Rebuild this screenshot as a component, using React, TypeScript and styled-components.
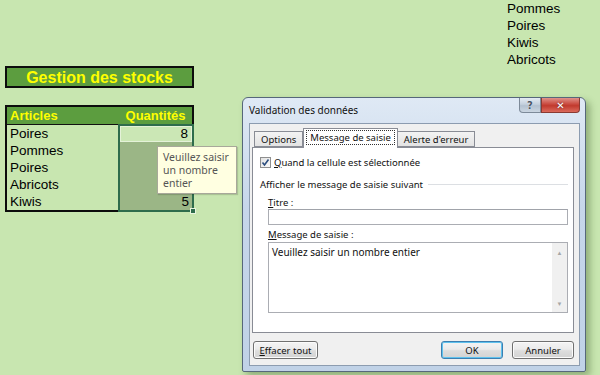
import React from 'react';
import styled, { createGlobalStyle } from 'styled-components';

const GlobalStyle = createGlobalStyle`
  html, body {
    margin: 0;
    padding: 0;
  }
  body {
    background: #c8e6b0;
    font-family: "Liberation Sans", Arial, sans-serif;
  }
`;

const Page = styled.div`
  position: relative;
  width: 600px;
  height: 375px;
  overflow: hidden;
  background: #c8e6b0;
  display: flex;
  justify-content: space-between;
`;

const Sheet = styled.div`
  padding: 66px 0 0 5px;
  width: 189px;
  display: flex;
  flex-direction: column;
  gap: 17px;
`;

const TitleBox = styled.div`
  height: 18px;
  border: 2px solid #0c0c0c;
  background: #5c9d3f;
  color: #ffff00;
  font-weight: bold;
  font-size: 16px;
  line-height: 19px;
  text-align: center;
`;

const Table = styled.div`
  border: 2px solid #0c0c0c;
  display: grid;
  grid-template-columns: 112px 73px;
  font-size: 13.5px;
`;

const HeadCell = styled.div<{ $align?: string }>`
  height: 17px;
  line-height: 17px;
  background: #5c9d3f;
  color: #ffff00;
  font-weight: bold;
  font-size: 13px;
  padding: 0 3px;
  text-align: ${p => p.$align || 'left'};
`;

const LeftBody = styled.div`
  border-top: 1px solid #111;
  border-right: 1px solid #111;
`;

const Selection = styled.div`
  position: relative;
  margin: 0 -2px -2px -1px;
  border: 2px solid #2e6c4c;
`;

const Cell = styled.div<{ $shade?: boolean; $right?: boolean }>`
  height: 17px;
  line-height: 17px;
  padding: 0 3px;
  color: #000;
  text-align: ${p => (p.$right ? 'right' : 'left')};
  background: ${p => (p.$shade ? '#9bb686' : 'transparent')};
`;

const ActiveCell = styled(Cell)`
  height: 14px;
  line-height: 14px;
  border: 1px solid #e4f2d8;
  background: #cbe7b5;
`;

const FillHandle = styled.div`
  position: absolute;
  right: -4px;
  bottom: -4px;
  width: 4px;
  height: 4px;
  background: #2e6c4c;
  border: 1px solid #e8f4de;
`;

const Tip = styled.div`
  position: absolute;
  left: 157px;
  top: 146px;
  width: 68px;
  height: 38px;
  padding: 4px 5px;
  background: #ffffe1;
  border: 1px solid #a8a89a;
  box-shadow: 1px 1px 1px rgba(0, 0, 0, 0.15);
  color: #555;
  font-family: "Noto Sans", "Open Sans", sans-serif;
  font-size: 10.5px;
  line-height: 13px;
`;

const FruitList = styled.div`
  width: 93px;
  font-size: 13.5px;
  line-height: 17px;
  color: #000;
`;

/* dialog window */

const Window = styled.div`
  position: absolute;
  left: 242px;
  top: 97px;
  width: 344px;
  height: 275px;
  box-sizing: border-box;
  border: 1px solid #56677a;
  border-radius: 6px 6px 2px 2px;
  background: linear-gradient(#dfe9f5, #c6d6ea 40%, #c0d2e7);
  box-shadow: 4px 4px 7px rgba(40, 70, 20, 0.35);
  display: flex;
  flex-direction: column;
  font-family: "Noto Sans", "Open Sans", sans-serif;
  font-size: 9.5px;
  color: #111;
`;

const TitleBar = styled.div`
  height: 25px;
  display: flex;
  align-items: flex-start;
  justify-content: space-between;
  padding: 0 5px 0 6px;
`;

const TitleText = styled.div`
  font-size: 10px;
  line-height: 25px;
  color: #111;
`;

const CaptionButtons = styled.div`
  display: flex;
`;

const CapButton = styled.div<{ $close?: boolean }>`
  width: ${p => (p.$close ? '39px' : '22px')};
  height: 15px;
  box-sizing: border-box;
  border: 1px solid ${p => (p.$close ? '#8a3a32' : '#7d8a99')};
  border-top: none;
  border-radius: ${p => (p.$close ? '0 0 4px 0' : '0 0 0 4px')};
  background: ${p =>
    p.$close
      ? 'linear-gradient(#e0928a, #c9483d 45%, #c13a2e 55%, #db6a5c)'
      : 'linear-gradient(#e4ebf3, #c4d0dd 45%, #b3c1d0 55%, #cbd6e2)'};
  display: flex;
  align-items: center;
  justify-content: center;
  color: ${p => (p.$close ? '#fff' : '#4a5666')};
  font-family: "DejaVu Sans", sans-serif;
  font-weight: bold;
  font-size: 10px;
  text-shadow: ${p => (p.$close ? '0 0 2px #5a2a2a' : '0 0 1px #fff')};
`;

const Content = styled.div`
  flex: 1;
  margin: 0 5px 5px 6px;
  border: 1px solid #8c9cb0;
  background: #f0f0f0;
  padding: 4px 5px 0 2px;
  display: flex;
  flex-direction: column;
`;

const Tabs = styled.div`
  display: flex;
  align-items: flex-end;
  padding-left: 2px;
  height: 19px;
  position: relative;
  z-index: 1;
`;

const Tab = styled.div<{ $active?: boolean }>`
  box-sizing: border-box;
  height: ${p => (p.$active ? '20px' : '16px')};
  margin: ${p => (p.$active ? '0 -1px -1px 0' : '0')};
  padding: ${p => (p.$active ? '0 3px 2px' : '0 6px')};
  border: 1px solid #898c95;
  border-bottom: ${p => (p.$active ? 'none' : '1px solid #898c95')};
  background: ${p => (p.$active ? '#fff' : 'linear-gradient(#f3f3f3, #e3e3e3)')};
  display: flex;
  align-items: center;
`;

const Focus = styled.span`
  outline: 1px dotted #333;
  padding: 0 3px;
  line-height: 13px;
`;

const Panel = styled.div`
  height: 186px;
  box-sizing: border-box;
  border: 1px solid #898c95;
  background: #fff;
  padding: 8px 5px 0 7px;
  display: flex;
  flex-direction: column;
`;

const CheckRow = styled.label`
  display: flex;
  align-items: center;
  gap: 3px;
  height: 13px;
`;

const CheckBox = styled.span`
  width: 11px;
  height: 11px;
  box-sizing: border-box;
  border: 1px solid #8f8f8f;
  background: linear-gradient(135deg, #e2e2e2, #fafafa);
  display: flex;
  align-items: center;
  justify-content: center;
`;

const Group = styled.div`
  margin-top: 9px;
  display: flex;
  align-items: center;
  gap: 5px;
  height: 13px;
  &::after {
    content: '';
    flex: 1;
    height: 1px;
    background: #dcdfe3;
  }
`;

const Field = styled.div`
  padding-left: 8px;
  display: flex;
  flex-direction: column;
`;

const Label = styled.div<{ $gap?: number }>`
  margin-top: ${p => p.$gap || 0}px;
  height: 13px;
  line-height: 13px;
`;

const Input = styled.div`
  height: 16px;
  box-sizing: border-box;
  border: 1px solid #abadb3;
  border-top-color: #a0a3aa;
  background: #fff;
`;

const TextArea = styled.div`
  margin-top: 1px;
  height: 71px;
  box-sizing: border-box;
  border: 1px solid #abadb3;
  background: #fff;
  display: flex;
`;

const AreaText = styled.div`
  flex: 1;
  padding: 3px 3px;
  font-size: 10px;
  line-height: 13px;
`;

const ScrollBar = styled.div`
  width: 15px;
  background: #f0f0f0;
  display: flex;
  flex-direction: column;
  justify-content: space-between;
  align-items: center;
  padding: 7px 0 5px;
  color: #a6a6a6;
  font-size: 6px;
  line-height: 6px;
`;

const ButtonRow = styled.div`
  margin-top: 8px;
  display: flex;
  align-items: center;
  gap: 9px;
  padding-left: 1px;
`;

const Button = styled.div<{ $primary?: boolean }>`
  width: 62px;
  height: 18px;
  box-sizing: border-box;
  border: 1px solid ${p => (p.$primary ? '#3c7fb1' : '#707070')};
  border-radius: 3px;
  background: linear-gradient(#f4f4f4, #ebebeb 45%, #dddddd 55%, #d3d3d3);
  box-shadow: ${p => (p.$primary ? 'inset 0 0 0 1px #5fc2ee' : 'inset 0 0 0 1px #fbfbfb')};
  display: flex;
  align-items: center;
  justify-content: center;
  line-height: 13px;
`;

const WideButton = styled(Button)`
  width: 65px;
  margin-right: auto;
`;

const quantities = ['8', '', '', '', '5'];
const articles = ['Poires', 'Pommes', 'Poires', 'Abricots', 'Kiwis'];

const App = () => {
  return (
    <>
      <GlobalStyle />
      <Page>
        <Sheet>
          <TitleBox>Gestion des stocks</TitleBox>
          <Table>
            <HeadCell>Articles</HeadCell>
            <HeadCell $align='center'>Quantités</HeadCell>
            <LeftBody>
              {articles.map((a, i) => (
                <Cell key={i}>{a}</Cell>
              ))}
            </LeftBody>
            <Selection>
              <ActiveCell $right>{quantities[0]}</ActiveCell>
              {quantities.slice(1).map((q, i) => (
                <Cell key={i} $shade $right>
                  {q}
                </Cell>
              ))}
              <FillHandle />
            </Selection>
          </Table>
        </Sheet>
        <FruitList>
          <div>Pommes</div>
          <div>Poires</div>
          <div>Kiwis</div>
          <div>Abricots</div>
        </FruitList>

        <Tip>
          Veuillez saisir
          <br />
          un nombre
          <br />
          entier
        </Tip>

        <Window>
          <TitleBar>
            <TitleText>Validation des données</TitleText>
            <CaptionButtons>
              <CapButton>?</CapButton>
              <CapButton $close>✕</CapButton>
            </CaptionButtons>
          </TitleBar>
          <Content>
            <Tabs>
              <Tab>Options</Tab>
              <Tab $active>
                <Focus>Message de saisie</Focus>
              </Tab>
              <Tab>Alerte d'erreur</Tab>
            </Tabs>
            <Panel>
              <CheckRow>
                <CheckBox>
                  <svg width='9' height='9' viewBox='0 0 9 9'>
                    <path d='M1.5 4.5 L3.5 7 L7.5 1.5' fill='none' stroke='#2b4d7e' strokeWidth='1.6' />
                  </svg>
                </CheckBox>
                <span>
                  <u>Q</u>uand la cellule est sélectionnée
                </span>
              </CheckRow>
              <Group>Afficher le message de saisie suivant</Group>
              <Field>
                <Label $gap={5}>
                  <u>T</u>itre :
                </Label>
                <Input />
                <Label $gap={3}>
                  <u>M</u>essage de saisie :
                </Label>
                <TextArea>
                  <AreaText>Veuillez saisir un nombre entier</AreaText>
                  <ScrollBar>
                    <span>▲</span>
                    <span>▼</span>
                  </ScrollBar>
                </TextArea>
              </Field>
            </Panel>
            <ButtonRow>
              <WideButton>
                <span>
                  <u>E</u>ffacer tout
                </span>
              </WideButton>
              <Button $primary>OK</Button>
              <Button>Annuler</Button>
            </ButtonRow>
          </Content>
        </Window>
      </Page>
    </>
  );
};

export default App;
